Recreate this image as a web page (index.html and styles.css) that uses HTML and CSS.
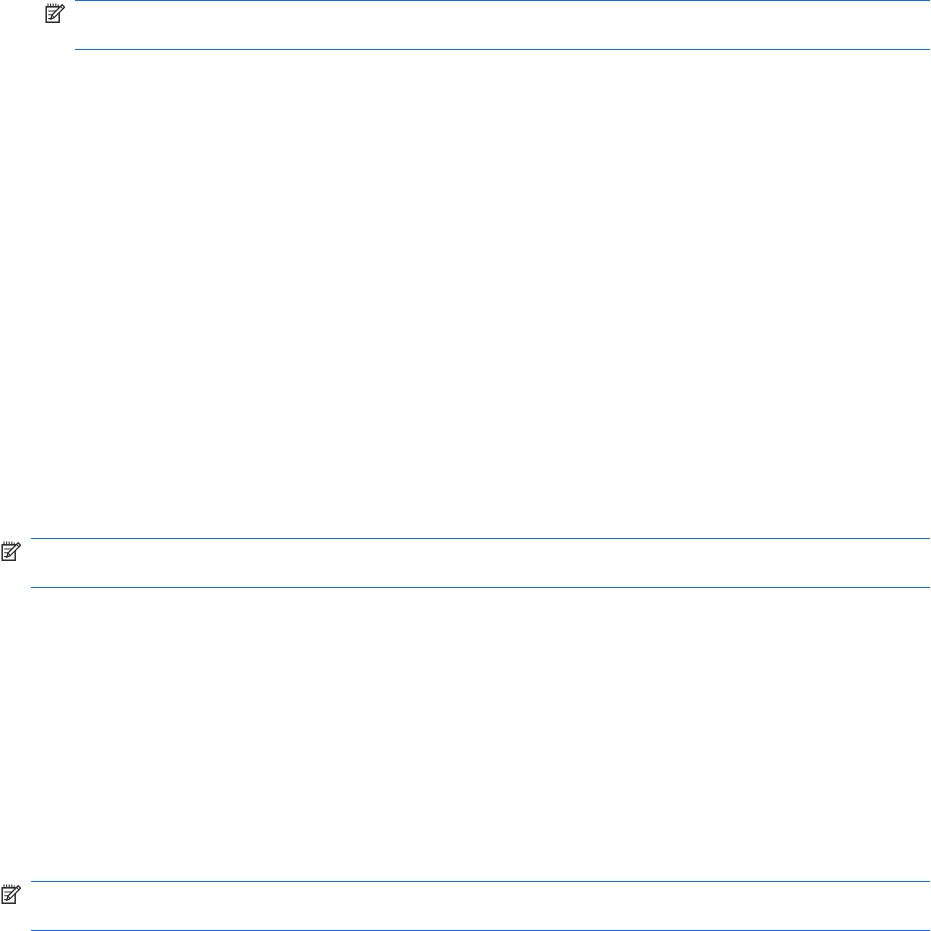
FILE: index.html
```html
<!DOCTYPE html>
<html lang="en">
<head>
<meta charset="utf-8">
<title>Notes</title>
<link rel="stylesheet" href="styles.css">
</head>
<body>
<main class="page">
  <section class="note note-indented">
    <svg class="note-icon" viewBox="0 0 20 20" aria-hidden="true">
      <path class="sheet" d="M1.2 3.8H14.2V19.2H1.2Z"/>
      <path class="rings" d="M3 .6V4.6M5.6 .6V4.6M8.2 .6V4.6M10.8 .6V4.6M13.2 1.4V4.6"/>
      <path class="rules" d="M3.2 8H11M3.2 11.8H8.4M3.2 15.6H6.2"/>
      <path class="pencil" d="M17.2 1.8L19.6 4.2L9.2 14.6L5.8 16.2L7 12Z"/>
      <path class="rules" d="M7 12L9.2 14.6M15.6 3.4L18 5.8"/>
    </svg>
    <div class="note-body"></div>
  </section>
  <section class="note note-second">
    <svg class="note-icon" viewBox="0 0 20 20" aria-hidden="true">
      <path class="sheet" d="M1.2 3.8H14.2V19.2H1.2Z"/>
      <path class="rings" d="M3 .6V4.6M5.6 .6V4.6M8.2 .6V4.6M10.8 .6V4.6M13.2 1.4V4.6"/>
      <path class="rules" d="M3.2 8H11M3.2 11.8H8.4M3.2 15.6H6.2"/>
      <path class="pencil" d="M17.2 1.8L19.6 4.2L9.2 14.6L5.8 16.2L7 12Z"/>
      <path class="rules" d="M7 12L9.2 14.6M15.6 3.4L18 5.8"/>
    </svg>
    <div class="note-body"></div>
  </section>
  <section class="note note-third">
    <svg class="note-icon" viewBox="0 0 20 20" aria-hidden="true">
      <path class="sheet" d="M1.2 3.8H14.2V19.2H1.2Z"/>
      <path class="rings" d="M3 .6V4.6M5.6 .6V4.6M8.2 .6V4.6M10.8 .6V4.6M13.2 1.4V4.6"/>
      <path class="rules" d="M3.2 8H11M3.2 11.8H8.4M3.2 15.6H6.2"/>
      <path class="pencil" d="M17.2 1.8L19.6 4.2L9.2 14.6L5.8 16.2L7 12Z"/>
      <path class="rules" d="M7 12L9.2 14.6M15.6 3.4L18 5.8"/>
    </svg>
    <div class="note-body"></div>
  </section>
</main>
</body>
</html>
```
FILE: styles.css
```css
html, body {
  margin: 0;
  padding: 0;
  background: #fff;
  overflow: hidden;
}
.page {
  display: flex;
  flex-direction: column;
  width: 930px;
  height: 931px;
}
.note {
  display: flex;
  align-items: flex-start;
}
.note-indented {
  margin-left: 44px;
}
.note-second {
  margin-top: 488px;
}
.note-third {
  margin-top: 293px;
}
.note-icon {
  flex: none;
  width: 20px;
  height: 20px;
  margin: 3px 10px 0 1px;
}
.note-body {
  flex: 1;
  height: 48px;
  border-top: 1px solid #0b6fe8;
  border-bottom: 1px solid #0b6fe8;
}
.sheet {
  fill: #fff;
  stroke: #2a2a2a;
  stroke-width: 1.5;
}
.rings {
  fill: none;
  stroke: #333;
  stroke-width: 1.1;
}
.rules {
  fill: none;
  stroke: #333;
  stroke-width: 1.1;
}
.pencil {
  fill: #fff;
  stroke: #2a2a2a;
  stroke-width: 1.3;
  stroke-linejoin: round;
}
```
